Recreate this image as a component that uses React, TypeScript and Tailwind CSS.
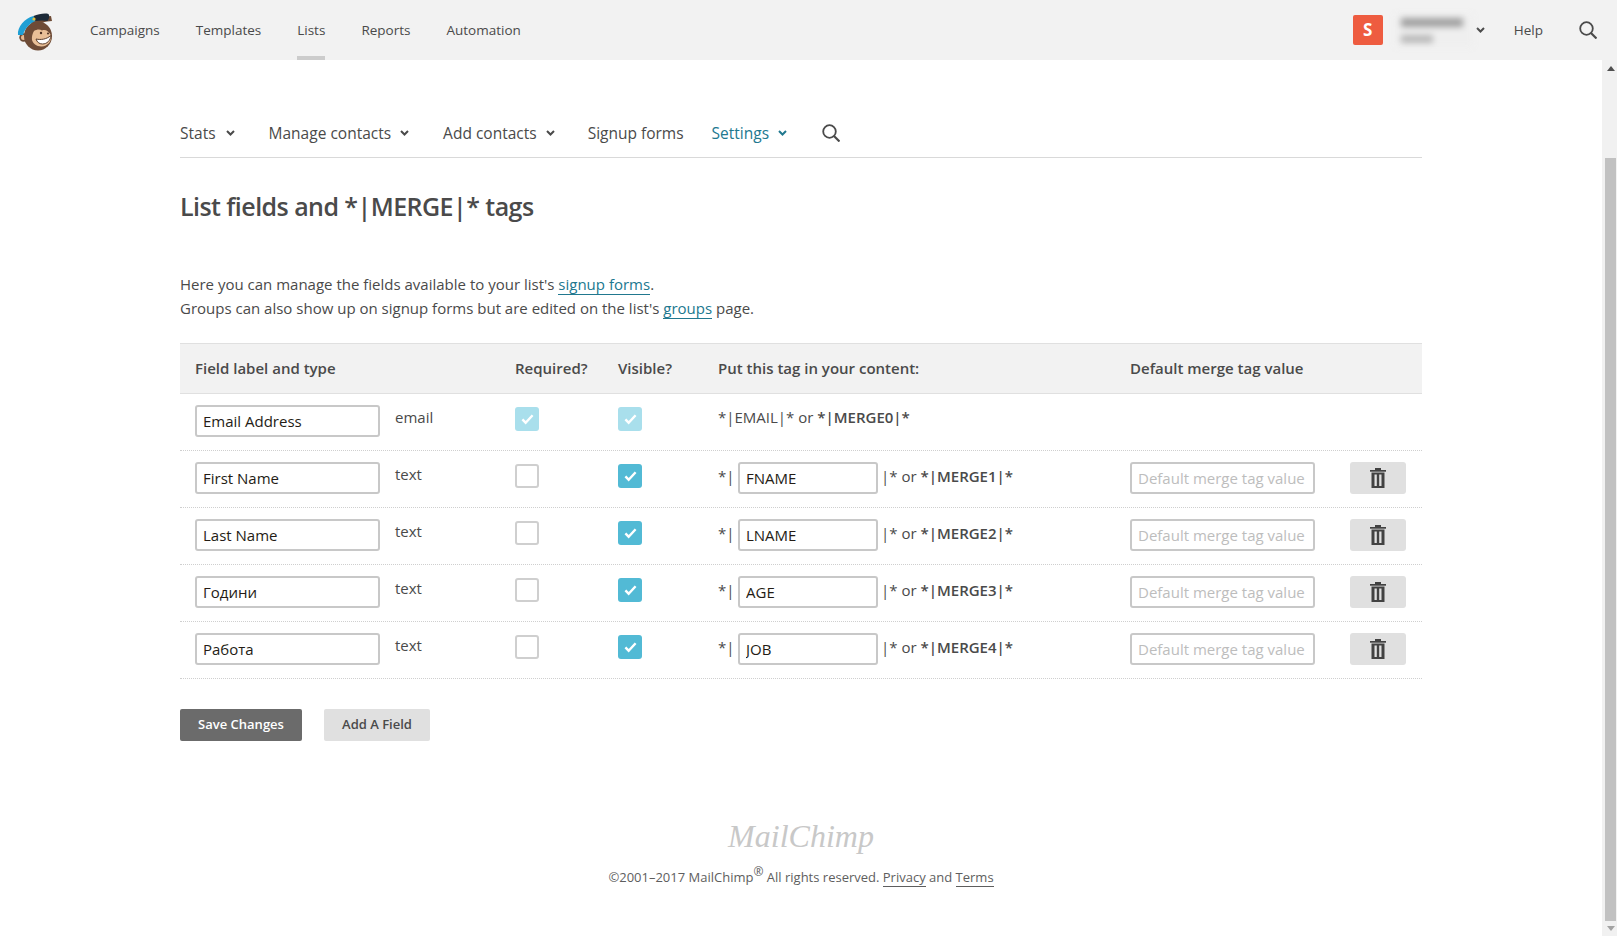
const fields = [
    { label: 'First Name', tag: 'FNAME', merge: 'MERGE1' },
    { label: 'Last Name', tag: 'LNAME', merge: 'MERGE2' },
    { label: 'Години', tag: 'AGE', merge: 'MERGE3' },
    { label: 'Работа', tag: 'JOB', merge: 'MERGE4' },
];

const rowGrid = 'grid grid-cols-[320px_103px_100px_412px_220px_86px]';
const inputClass = 'h-8 rounded-[3px] border-2 border-[#c8c8c8] bg-white px-1.5 text-[15px] text-[#241c15] outline-none placeholder:text-[#bdbdbd]';

function Chevron({ className }: { className?: string }) {
    return (
        <svg viewBox="0 0 9 6" className={`h-[6px] w-[9px] ${className ?? ''}`} fill="none" stroke="currentColor" strokeWidth="2">
            <path d="M1 1l3.5 3.5L8 1" />
        </svg>
    );
}

function Check() {
    return (
        <svg viewBox="0 0 14 12" className="h-3 w-[13px] text-white" fill="none" stroke="currentColor" strokeWidth="2.6">
            <path d="M1.5 6.5l3.5 3.5 7.5-8" />
        </svg>
    );
}

function Checkbox({ state }: { state: 'off' | 'on' | 'disabled' }) {
    if (state === 'off') {
        return <div className="mt-[13px] h-6 w-6 rounded-[3px] border-2 border-[#cfcfcf] bg-white" />;
    }
    return (
        <div className={`mt-[13px] flex h-6 w-6 items-center justify-center rounded-[3px] ${state === 'on' ? 'bg-[#52bad5]' : 'bg-[#a9dfec]'}`}>
            <Check />
        </div>
    );
}

function SearchIcon({ className }: { className?: string }) {
    return (
        <svg viewBox="0 0 18 18" className={`h-[18px] w-[18px] text-[#4a4a4a] ${className ?? ''}`} fill="none" stroke="currentColor" strokeWidth="1.800">
            <circle cx="7.500" cy="7.500" r="6.300" />
            <path d="M12 12l5.500 5.500" strokeWidth="2.200" />
        </svg>
    );
}

function TrashIcon() {
    return (
        <svg viewBox="0 0 16 20" className="h-5 w-4 text-[#424242]" fill="currentColor">
            <rect x="5" y="0" width="6" height="2" />
            <rect x="0" y="2" width="16" height="1.700" />
            <path d="M1.500 4.500h13V20h-13zM4.500 6.500V18h2.300V6.500zM9.200 6.500V18h2.300V6.500z" fillRule="evenodd" />
        </svg>
    );
}

function Monkey() {
    return (
        <svg viewBox="0 0 38 38" className="h-[38px] w-[38px]">
            <circle cx="6.500" cy="24.500" r="4.200" fill="#6b4a35" />
            <circle cx="6.500" cy="24.500" r="2.500" fill="#e8b98f" />
            <ellipse cx="21" cy="23" rx="14" ry="14.500" fill="#6e4b36" />
            <path d="M17 18c3-2 6-2 8-.5 3-1.500 7 .5 9 5 1 5-3 11-9.500 11-5.500 0-8.500-3-9.500-6.500-.5-3 .5-6.500 2-9z" fill="#e9bf97" />
            <path d="M14 9c5-3 13-6 20-6l1 5c-6 0-14 3-20 6z" fill="#6e4b36" />
            <path d="M1 22C0 14 8 5 16.500 3l2 5C13 10 8 15 6 22z" fill="#1f9fd4" />
            <path d="M16.500 3c5-2 11-3 15-2 1.500 2 .5 5-1 7-5-1-8-.5-12 0z" fill="#1d2a38" />
            <circle cx="17" cy="6" r="1.600" fill="#e5c23f" />
            <path d="M19 26c5 1 10 .5 15-3.500-.5 5-4 8.500-8.500 8.500-3.500 0-5.500-2-6.500-5z" fill="#fff" stroke="#5c3d2b" strokeWidth="1" />
            <circle cx="24" cy="20" r="1.200" fill="#4a2f20" />
            <circle cx="31" cy="20.500" r="1" fill="#4a2f20" />
        </svg>
    );
}

export default function App() {
    return (
        <div className="flex h-[936px] w-full flex-col overflow-hidden bg-white font-['Open_Sans',sans-serif] text-[#4a4a4a]">
            {/* Top bar */}
            <header className="flex h-[60px] shrink-0 items-stretch bg-[#f2f2f2] pl-[17px] pr-5">
                <div className="flex items-center pt-[3px]">
                    <Monkey />
                </div>
                <nav className="ml-[35px] flex gap-9 text-[13.500px] font-medium text-[#4a4a4a]">
                    <a className="flex items-center">Campaigns</a>
                    <a className="flex items-center">Templates</a>
                    <a className="flex items-center border-b-4 border-[#cccccc] pt-1">Lists</a>
                    <a className="flex items-center">Reports</a>
                    <a className="flex items-center">Automation</a>
                </nav>
                <div className="ml-auto flex items-center">
                    <div className="flex h-[30px] w-[30px] items-center justify-center rounded-[2px] bg-[#ee5c40] text-[17px] font-bold text-white">S</div>
                    <div className="ml-3 flex h-[33px] w-[78px] flex-col justify-between bg-[#efefef] py-1 pl-[6px] blur-[3px]">
                        <div className="h-[9px] w-[62px] bg-[#a0a0a0]" />
                        <div className="h-[8px] w-[32px] bg-[#b8b8b8]" />
                    </div>
                    <Chevron className="ml-[3px] text-[#4a4a4a]" />
                    <span className="ml-[29px] text-[13.500px] font-medium text-[#4a4a4a]">Help</span>
                    <SearchIcon className="ml-9" />
                </div>
            </header>

            <div className="flex min-h-0 flex-1">
                <main className="flex-1 px-[180px]">
                    {/* List sub navigation */}
                    <div className="flex items-center border-b-[1.500px] border-[#d9d9d9] pb-3 pt-[61px] text-[15.500px] font-medium leading-6">
                        <a className="flex items-center gap-[10px] pr-[6px]">Stats <Chevron /></a>
                        <a className="ml-[28px] flex items-center gap-[9px] pr-[6px]">Manage contacts <Chevron /></a>
                        <a className="ml-[28px] flex items-center gap-[9px] pr-[6px]">Add contacts <Chevron /></a>
                        <a className="ml-[27px]">Signup forms</a>
                        <a className="ml-[28px] flex items-center gap-[9px] text-[#21788f]">Settings <Chevron /></a>
                        <SearchIcon className="ml-[35px]" />
                    </div>

                    <h1 className="mt-[30px] text-[25px] font-semibold leading-9 tracking-[-0.55px]">List fields and *|MERGE|* tags</h1>

                    <div className="mt-12 text-[15px] leading-6">
                        <p>Here you can manage the fields available to your list's <a className="border-b border-[#21788f] text-[#21788f]">signup forms</a>.</p>
                        <p>Groups can also show up on signup forms but are edited on the list's <a className="border-b border-[#21788f] text-[#21788f]">groups</a> page.</p>
                    </div>

                    {/* Fields table */}
                    <div className="mt-[23px]">
                        <div className={`${rowGrid} h-[51px] items-center border-y-[1.500px] border-[#e0e0e0] bg-[#f2f2f2] text-[15px] font-semibold`}>
                            <div className="pl-[15px]">Field label and type</div>
                            <div className="pl-[15px]">Required?</div>
                            <div className="pl-[15px]">Visible?</div>
                            <div className="pl-[15px]">Put this tag in your content:</div>
                            <div className="pl-[15px]">Default merge tag value</div>
                            <div />
                        </div>

                        <div className={`${rowGrid} h-[57px] border-b border-dotted border-[#cfcfcf]`}>
                            <div className="flex items-start pl-[15px] pt-[11px]">
                                <input readOnly value="Email Address" className={`${inputClass} w-[185px]`} />
                                <span className="ml-[15px] text-[15px] leading-6">email</span>
                            </div>
                            <div className="pl-[15px]"><Checkbox state="disabled" /></div>
                            <div className="pl-[15px]"><Checkbox state="disabled" /></div>
                            <div className="pl-[15px] pt-[11px] text-[15px] leading-6">*|EMAIL|* or <span className="font-semibold">*|MERGE0|*</span></div>
                            <div />
                            <div />
                        </div>

                        {fields.map((field) => (
                            <div key={field.tag} className={`${rowGrid} h-[57px] border-b border-dotted border-[#cfcfcf]`}>
                                <div className="flex items-start pl-[15px] pt-[11px]">
                                    <input readOnly value={field.label} className={`${inputClass} w-[185px]`} />
                                    <span className="ml-[15px] text-[15px] leading-6">text</span>
                                </div>
                                <div className="pl-[15px]"><Checkbox state="off" /></div>
                                <div className="pl-[15px]"><Checkbox state="on" /></div>
                                <div className="flex items-start pl-[15px] pt-[11px] text-[15px] leading-6">
                                    <span className="mt-[2px] w-5">*|</span>
                                    <input readOnly value={field.tag} className={`${inputClass} w-[140px]`} />
                                    <span className="ml-[3px] mt-[2px]">|* or <span className="font-semibold">*|{field.merge}|*</span></span>
                                </div>
                                <div className="pl-[15px] pt-[11px]">
                                    <input readOnly placeholder="Default merge tag value" className={`${inputClass} w-[185px]`} />
                                </div>
                                <div className="pl-[15px] pt-[11px]">
                                    <button className="flex h-8 w-[56px] items-center justify-center rounded-[3px] bg-[#e0e0e0]">
                                        <TrashIcon />
                                    </button>
                                </div>
                            </div>
                        ))}
                    </div>

                    <div className="mt-[30px] flex gap-[22px]">
                        <button className="h-8 w-[122px] rounded-[2px] bg-[#6b6b6b] text-[13px] font-semibold text-white">Save Changes</button>
                        <button className="h-8 w-[106px] rounded-[2px] bg-[#e0e0e0] text-[13px] font-semibold text-[#4a4a4a]">Add A Field</button>
                    </div>

                    {/* Footer */}
                    <footer className="mt-[72px] text-center">
                        <div className="font-['Liberation_Serif',serif] text-[32px] italic leading-[46px] text-[#c8c8c8]">MailChimp</div>
                        <p className="mt-[6px] text-[13px] leading-6 text-[#5e5e5e]">
                            ©2001–2017 MailChimp<sup className="text-[12px]">®</sup> All rights reserved. <a className="border-b border-[#5e5e5e]">Privacy</a> and <a className="border-b border-[#5e5e5e]">Terms</a>
                        </p>
                    </footer>
                </main>

                {/* Scrollbar */}
                <aside className="flex w-[15px] shrink-0 flex-col items-center bg-[#f1f1f1] pl-[2px]">
                    <div className="mt-[6px] h-0 w-0 border-x-[4px] border-b-[5px] border-x-transparent border-b-[#505050]" />
                    <div className="mt-[87px] h-[763px] w-[11px] bg-[#c1c1c1]" />
                    <div className="mt-[5px] h-0 w-0 border-x-[4px] border-t-[5px] border-x-transparent border-t-[#a3a3a3]" />
                </aside>
            </div>
        </div>
    );
}
